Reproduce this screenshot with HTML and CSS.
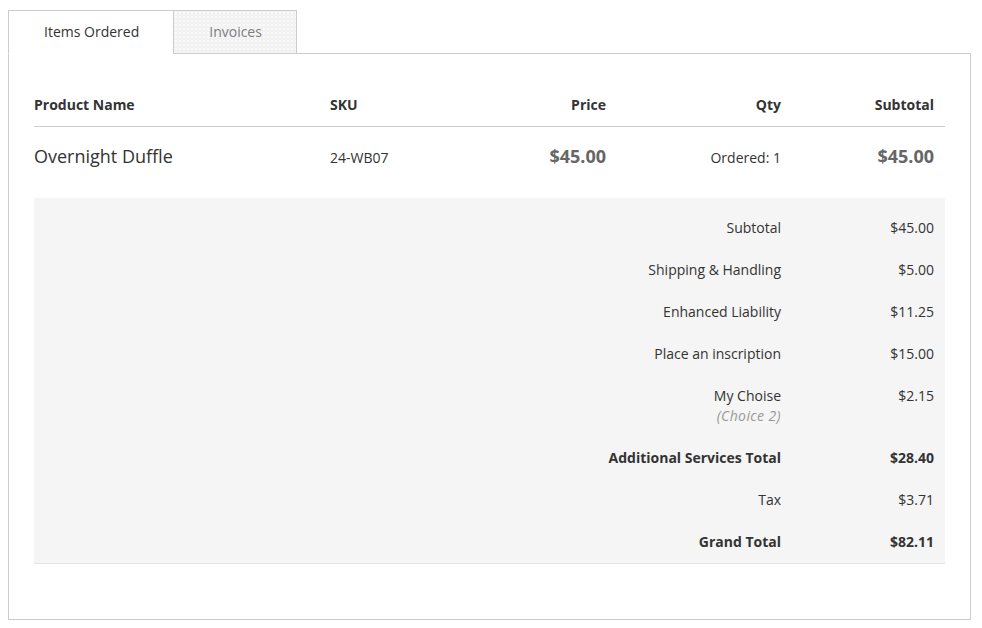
FILE: index.html
```html
<!DOCTYPE html>
<html lang="en">
<head>
<meta charset="utf-8">
<title>Order</title>
<link rel="stylesheet" href="styles.css">
</head>
<body>
<div class="order">
  <div class="tabs">
    <div class="tab tab-active">Items Ordered</div>
    <div class="tab tab-inactive">Invoices</div>
  </div>
  <div class="panel">
    <table class="items">
      <colgroup>
        <col class="c-name"><col class="c-sku"><col class="c-price"><col class="c-qty"><col class="c-sub">
      </colgroup>
      <thead>
        <tr>
          <th class="col-name">Product Name</th>
          <th class="col-sku">SKU</th>
          <th class="col-right">Price</th>
          <th class="col-right">Qty</th>
          <th class="col-right col-last">Subtotal</th>
        </tr>
      </thead>
      <tbody>
        <tr class="item-row">
          <td class="col-name item-name">Overnight Duffle</td>
          <td class="col-sku">24-WB07</td>
          <td class="col-right price">$45.00</td>
          <td class="col-right">Ordered: 1</td>
          <td class="col-right col-last price">$45.00</td>
        </tr>
      </tbody>
      <tfoot>
        <tr class="first">
          <th colspan="4" class="mark">Subtotal</th>
          <td class="amount">$45.00</td>
        </tr>
        <tr>
          <th colspan="4" class="mark">Shipping &amp; Handling</th>
          <td class="amount">$5.00</td>
        </tr>
        <tr>
          <th colspan="4" class="mark">Enhanced Liability</th>
          <td class="amount">$11.25</td>
        </tr>
        <tr>
          <th colspan="4" class="mark">Place an inscription</th>
          <td class="amount">$15.00</td>
        </tr>
        <tr>
          <th colspan="4" class="mark">My Choise<br><span class="choice">(Choice 2)</span></th>
          <td class="amount">$2.15</td>
        </tr>
        <tr class="strong">
          <th colspan="4" class="mark">Additional Services Total</th>
          <td class="amount">$28.40</td>
        </tr>
        <tr>
          <th colspan="4" class="mark">Tax</th>
          <td class="amount">$3.71</td>
        </tr>
        <tr class="strong last">
          <th colspan="4" class="mark">Grand Total</th>
          <td class="amount">$82.11</td>
        </tr>
      </tfoot>
    </table>
  </div>
</div>
</body>
</html>
```
FILE: styles.css
```css
html, body {
  background: #fff;
}
body {
  margin: 10px 8px 8px 8px;
  font-family: "Open Sans", "DejaVu Sans", sans-serif;
  font-size: 14px;
  line-height: 20px;
  color: #333;
}
.order {
  width: 963px;
}
.tabs {
  display: flex;
  position: relative;
  z-index: 1;
  margin-bottom: -1px;
}
.tab {
  padding: 11px 34px 11px 35px;
  border: 1px solid #ccc;
  line-height: 20px;
  font-size: 14px;
}
.tab-active {
  background: #fff;
  border-bottom-color: #fff;
  color: #333;
}
.tab-inactive {
  margin-left: -1px;
  color: #7d7d7d;
  background:
    radial-gradient(circle, rgba(255,255,255,0.9) 0.6px, transparent 0.9px) 0 0 / 4px 4px,
    #f2f2f2;
}
.panel {
  border: 1px solid #ccc;
  padding: 30px 25px 55px;
}
.items {
  width: 100%;
  table-layout: fixed;
  border-collapse: separate;
  border-spacing: 0;
}
.c-name { width: 286px; }
.c-sku { width: 150px; }
.c-price { width: 146px; }
.c-qty { width: 175px; }
.c-sub { width: 154px; }

.items thead th {
  padding: 11px 10px;
  font-weight: 700;
  border-bottom: 1px solid #ccc;
  text-align: left;
}
.items th.col-name, .items td.col-name {
  padding-left: 0;
}
.items .col-right {
  text-align: right;
}
.items th.col-last, .items td.col-last {
  padding-right: 11px;
}
.item-row td {
  padding: 16px 10px 29px;
  vertical-align: baseline;
}
.item-name {
  font-size: 18px;
  line-height: 26px;
}
.price {
  font-size: 18px;
  line-height: 26px;
  font-weight: 700;
  color: #666;
}
.items tfoot th,
.items tfoot td {
  background: #f5f5f5;
  padding: 11px 10px;
  text-align: right;
  font-weight: 400;
  vertical-align: top;
}
.items tfoot td.amount {
  padding-right: 11px;
}
.items tfoot tr.first th,
.items tfoot tr.first td {
  padding-top: 20px;
}
.items tfoot tr.last th,
.items tfoot tr.last td {
  border-bottom: 1px solid #e3e3e3;
}
.items tfoot tr.strong th,
.items tfoot tr.strong td {
  font-weight: 700;
}
.choice {
  font-style: italic;
  color: #999;
  letter-spacing: 0.4px;
}
```
